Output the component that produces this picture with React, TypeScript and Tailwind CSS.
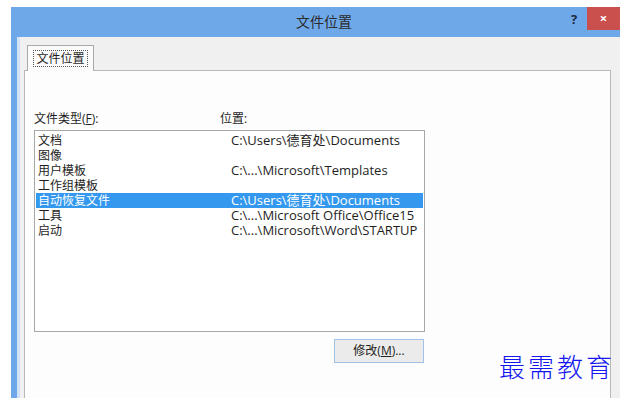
import React from "react";

const rows: { name: string; path: string }[] = [
  { name: "文档", path: "C:\\Users\\德育处\\Documents" },
  { name: "图像", path: "" },
  { name: "用户模板", path: "C:\\...\\Microsoft\\Templates" },
  { name: "工作组模板", path: "" },
  { name: "自动恢复文件", path: "C:\\Users\\德育处\\Documents" },
  { name: "工具", path: "C:\\...\\Microsoft Office\\Office15" },
  { name: "启动", path: "C:\\...\\Microsoft\\Word\\STARTUP" },
];

export default function App() {
  return (
    <div
      className="relative w-[620px] h-[398px] overflow-hidden bg-white text-[12px] text-[#1e1e1e]"
      style={{ fontFamily: '"Open Sans", "Noto Sans CJK SC", sans-serif' }}
    >
      <div className="h-[7px] bg-white" />
      <div className="ml-[11px] flex flex-col h-[391px]">
        {/* Title bar */}
        <div className="h-[30px] bg-[#6fa8e9] flex items-start relative">
          <div className="flex-1 flex justify-center pt-[6px] pl-[66px]">
            <span className="text-[14px] leading-[18px] text-[#2b2b2b]">文件位置</span>
          </div>
          <div className="w-[16px] pt-[4px] text-[13px] font-bold text-[#1e2a44] leading-[16px]">?</div>
          <div className="w-[33px] h-[23px] bg-[#c9504c] flex items-center justify-center text-white text-[13px] font-bold leading-none">
            ×
          </div>
        </div>
        {/* Body */}
        <div className="flex-1 flex bg-[#6fa8e9]">
          <div className="w-[6px]" />
          <div className="flex-1 flex flex-col bg-[#f0f0f0] border-l-[3px] border-[#d3e3f6]">
            {/* Tab strip */}
            <div className="h-[33px] flex items-end pl-[7px]">
              <div className="h-[26px] w-[67px] border border-b-0 border-[#a9a9a9] bg-[#fbfbfb] flex items-start justify-center pt-[4px] relative top-[1px] z-10">
                <span className="border border-dotted border-[#555] px-[2px] leading-[15px] text-[12px]">文件位置</span>
              </div>
            </div>
            {/* Pane */}
            <div className="flex-1 ml-[4px] mr-[9px] bg-[#fdfdfd] border-l border-t border-r border-[#b9b9b9] flex flex-col">
              <div className="h-[40px]" />
              <div className="flex h-[16px] leading-[16px] pl-[9px]">
                <span className="w-[186px]">
                  文件类型(<span className="underline">F</span>):
                </span>
                <span>位置:</span>
              </div>
              <div className="h-[3px]" />
              <div className="ml-[9px] w-[391px] h-[202px] border border-[#a7a7a7] bg-white pt-[2px] px-[1px]">
                {rows.map((r, i) => (
                  <div
                    key={i}
                    className={
                      "flex items-center h-[15px] leading-[15px] " +
                      (i === 4 ? "bg-[#3398ee] text-white" : "")
                    }
                  >
                    <span className="w-[195px] pl-[2px]">{r.name}</span>
                    <span className="text-[13px] leading-[15px]">{r.path}</span>
                  </div>
                ))}
              </div>
              <div className="flex pl-[309px] pt-[7px]">
                <div className="w-[90px] h-[24px] border border-[#9fc2e6] bg-[#ebebeb] flex items-center justify-center text-[12px] text-[#222]">
                  修改(<span className="underline">M</span>)...
                </div>
              </div>
            </div>
          </div>
        </div>
      </div>
      <div
        className="absolute left-[499px] top-[350px] text-[26px] leading-[32px] tracking-[3px] text-[#1515f0]"
        style={{ fontFamily: '"Noto Sans CJK SC", serif', fontWeight: 300 }}
      >
        最需教育
      </div>
    </div>
  );
}
